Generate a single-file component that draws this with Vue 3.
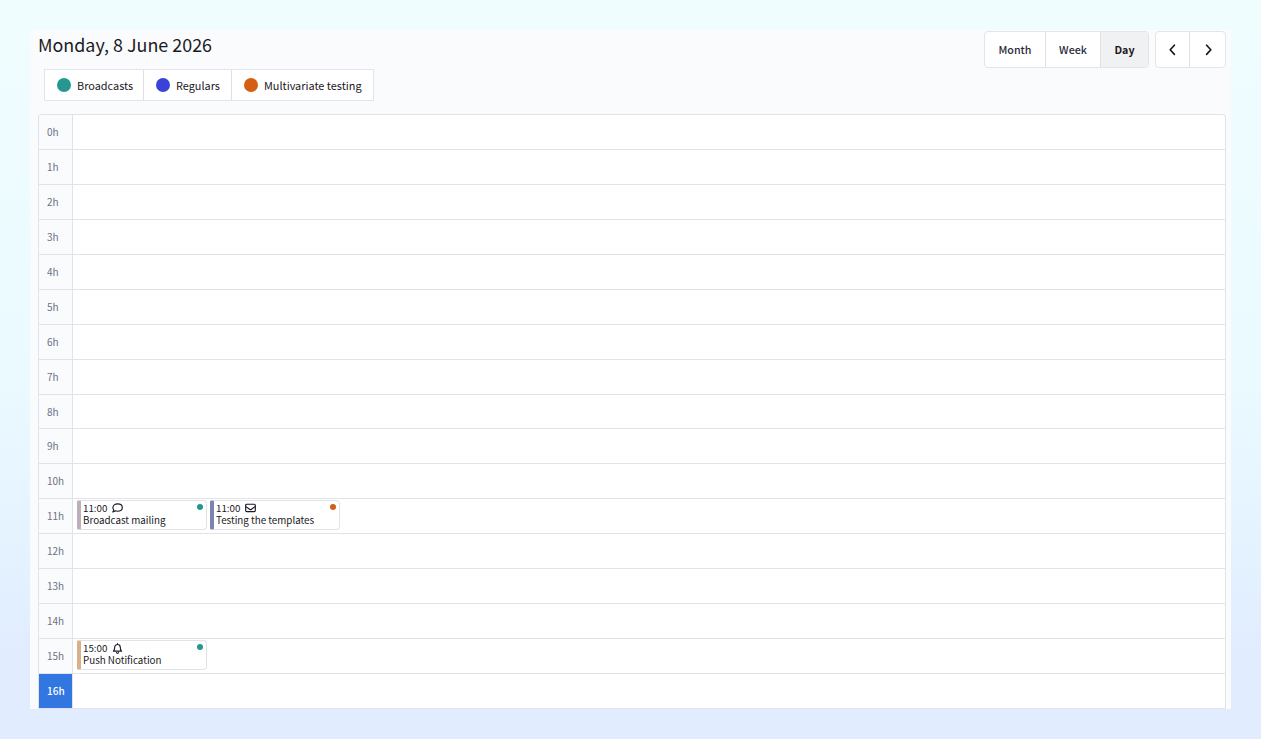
<template>
  <div class="page">
    <section class="planner">

      <header class="top">
        <div class="intro">
          <h1>Monday, 8 June 2026</h1>
          <ul class="legend">
            <li v-for="k in kinds" :key="k.name" :class="k.key">
              <i class="bullet"></i><span>{{ k.name }}</span>
            </li>
          </ul>
        </div>

        <div class="controls">
          <div class="group views">
            <button v-for="v in views" :key="v" :class="[v.toLowerCase(), { active: v === view }]" @click="view = v">{{ v }}</button>
          </div>
          <div class="group arrows">
            <button aria-label="Previous day">
              <svg width="12" height="14" viewBox="0 0 12 14"><path d="M7.4 2.2 3.2 6.8l4.2 4.6" /></svg>
            </button>
            <button aria-label="Next day">
              <svg width="12" height="14" viewBox="0 0 12 14"><path d="M4.6 2.2 8.8 6.8l-4.2 4.6" /></svg>
            </button>
          </div>
        </div>
      </header>

      <!-- Hours -->
      <div class="hours">
        <div v-for="h in 17" :key="h" class="row" :class="{ now: h - 1 === currentHour }">
          <div class="hour">{{ h - 1 }}h</div>
          <div class="slot">
            <article v-for="e in eventsAt(h - 1)" :key="e.title" class="event" :class="[e.channel, e.kind]">
              <div class="when">
                <span>{{ e.hour }}:00</span>
                <svg v-if="e.channel === 'chat'" width="11" height="10" viewBox="0 0 11 10">
                  <path d="M5.6.8c2.7 0 4.7 1.6 4.7 3.7S8.3 8.2 5.6 8.2c-.8 0-1.5-.1-2.2-.4C2.7 8.4 1.8 8.8.8 8.9c.5-.5.9-1.2 1-1.9C1.2 6.3.9 5.4.9 4.5.9 2.400 2.900.8 5.600.8Z" />
                </svg>
                <svg v-else-if="e.channel === 'mail'" width="11" height="10" viewBox="0 0 11 10">
                  <rect x=".7" y="1.2" width="9.6" height="7.4" rx="1" />
                  <path d="m.9 3.6 3.700 2.700c.5.4 1.300.4 1.800 0l3.700-2.700" />
                </svg>
                <svg v-else width="11" height="11" viewBox="0 0 11 11">
                  <path d="M5.5.6v.8M2.700 4.400c0-1.700 1.200-2.900 2.800-2.900s2.800 1.200 2.800 2.900c0 2.100.5 2.800 1.300 3.700H1.400c.8-.9 1.300-1.600 1.300-3.700Z" />
                  <path d="M4.500 9.600c.2.500.6.7 1 .7s.8-.2 1-.7" />
                </svg>
              </div>
              <div class="title">{{ e.title }}</div>
              <i class="dot"></i>
            </article>
          </div>
        </div>
      </div>

    </section>
  </div>
</template>

<script setup>
import { ref } from 'vue'

const views = ['Month', 'Week', 'Day']
const view = ref('Day')
const currentHour = 16

const kinds = [
  { key: 'broadcast', name: 'Broadcasts' },
  { key: 'regular', name: 'Regulars' },
  { key: 'multi', name: 'Multivariate testing' },
]

const events = [
  { hour: 11, title: 'Broadcast mailing', channel: 'chat', kind: 'broadcast' },
  { hour: 11, title: 'Testing the templates', channel: 'mail', kind: 'multi' },
  { hour: 15, title: 'Push Notification', channel: 'push', kind: 'broadcast' },
]

const eventsAt = (h) => events.filter((e) => e.hour === h)
</script>

<style>
body { margin: 0; }
</style>

<style scoped>
.page {
  box-sizing: border-box;
  width: 100%;
  height: 100vh;
  padding: 30px;
  overflow: hidden;
  background: linear-gradient(180deg, #f0fdff 0%, #eafaff 52%, #e1edff 88%, #e1edff 100%);
  font-family: "Noto Sans CJK SC", "Noto Sans", sans-serif;
  color: #1a1824;
}

.planner {
  box-sizing: border-box;
  height: 679px;
  padding: 0 5px 0 8px;
  background: #fafbfd;
  overflow: hidden;
}

.top {
  display: flex;
  justify-content: space-between;
  height: 84px;
}

h1 {
  margin: 0;
  height: 39px;
  font-size: 17.9px;
  font-weight: 400;
  line-height: 29px;
  color: #1b1a22;
}

/* ── Legend ── */
.legend {
  display: flex;
  box-sizing: border-box;
  height: 32px;
  margin: 0 0 0 6px;
  padding: 0;
  list-style: none;
  background: #fff;
  border: 1px solid #e4e4ec;
}

.legend li {
  display: flex;
  box-sizing: border-box;
  align-items: center;
  gap: 6px;
  padding-left: 12px;
  font-size: 10.9px;
  line-height: 30px;
  white-space: nowrap;
}

.legend span { padding-bottom: 1px; line-height: 28px; }
.legend li + li { border-left: 1px solid #dfdfe7; }
.legend .broadcast { width: 98px; }
.legend .regular { width: 88px; }
.legend .multi { width: 142px; }

.bullet {
  width: 14px;
  height: 14px;
  flex: none;
  border-radius: 50%;
}

.broadcast .bullet, .broadcast .dot { background: #249793; }
.regular .bullet { background: #3b42d9; }
.multi .bullet, .multi .dot { background: #d45f14; }

/* ── Controls ── */
.controls {
  display: flex;
  gap: 6px;
  padding-top: 1px;
}

.group {
  display: flex;
  box-sizing: border-box;
  height: 37px;
  border: 1px solid #e5e5e9;
  border-radius: 4px;
  background: #fff;
  overflow: hidden;
}

button {
  display: flex;
  align-items: center;
  justify-content: center;
  box-sizing: border-box;
  padding: 0;
  border: 0;
  background: none;
  font: 500 10.7px/35px "Noto Sans CJK SC", "Noto Sans", sans-serif;
  color: #2b293a;
}

button + button { border-left: 1px solid #dfdfe6; }
.month { width: 60px; }
.week { width: 55px; }
.day { width: 48px; }
.active { background: #f0f1f3; color: #1b1924; font-weight: 700; }
.arrows button { width: 33px; }
.arrows button + button { width: 36px; }

svg {
  fill: none;
  stroke: #1b1928;
  stroke-linecap: round;
  stroke-linejoin: round;
}

.when svg { stroke-width: 1.15; }
.arrows svg { stroke-width: 1.7; }

/* ── Hours ── */
.hours {
  display: grid;
  grid-template-rows: repeat(17, 34.94px);
  box-sizing: border-box;
  height: 595px;
  border: 1px solid #e2e3e8;
  border-bottom: 0;
  border-radius: 4px 4px 0 0;
  background: #fff;
  overflow: hidden;
}

.row {
  display: flex;
  box-sizing: border-box;
  border-bottom: 1px solid #e2e3e8;
}

.hour {
  box-sizing: border-box;
  width: 34px;
  padding-left: 8px;
  border-right: 1px solid #e2e3e8;
  background: #fafbfd;
  font-size: 10px;
  line-height: 33.9px;
  color: #6c7283;
}

.now .hour { background: #3276e2; color: #fff; font-weight: 500; }

.slot {
  display: flex;
  gap: 3px;
  padding: 1px 0 0 4px;
}

.event {
  position: relative;
  box-sizing: border-box;
  width: 130px;
  height: 30px;
  padding: 1px 0 0 2px;
  border: 1px solid #e2e3e9;
  border-left: 4px solid;
  border-radius: 2px 4px 4px 2px;
  font-size: 9.8px;
  line-height: 12px;
  white-space: nowrap;
}

.chat { border-left-color: #bdb0be; }
.mail { border-left-color: #7b83ae; }
.push { border-left-color: #d7b08c; }

.when {
  display: flex;
  align-items: center;
  gap: 5px;
  height: 12px;
}

.dot {
  position: absolute;
  top: 3px;
  right: 3px;
  width: 6px;
  height: 6px;
  border-radius: 50%;
}
</style>
